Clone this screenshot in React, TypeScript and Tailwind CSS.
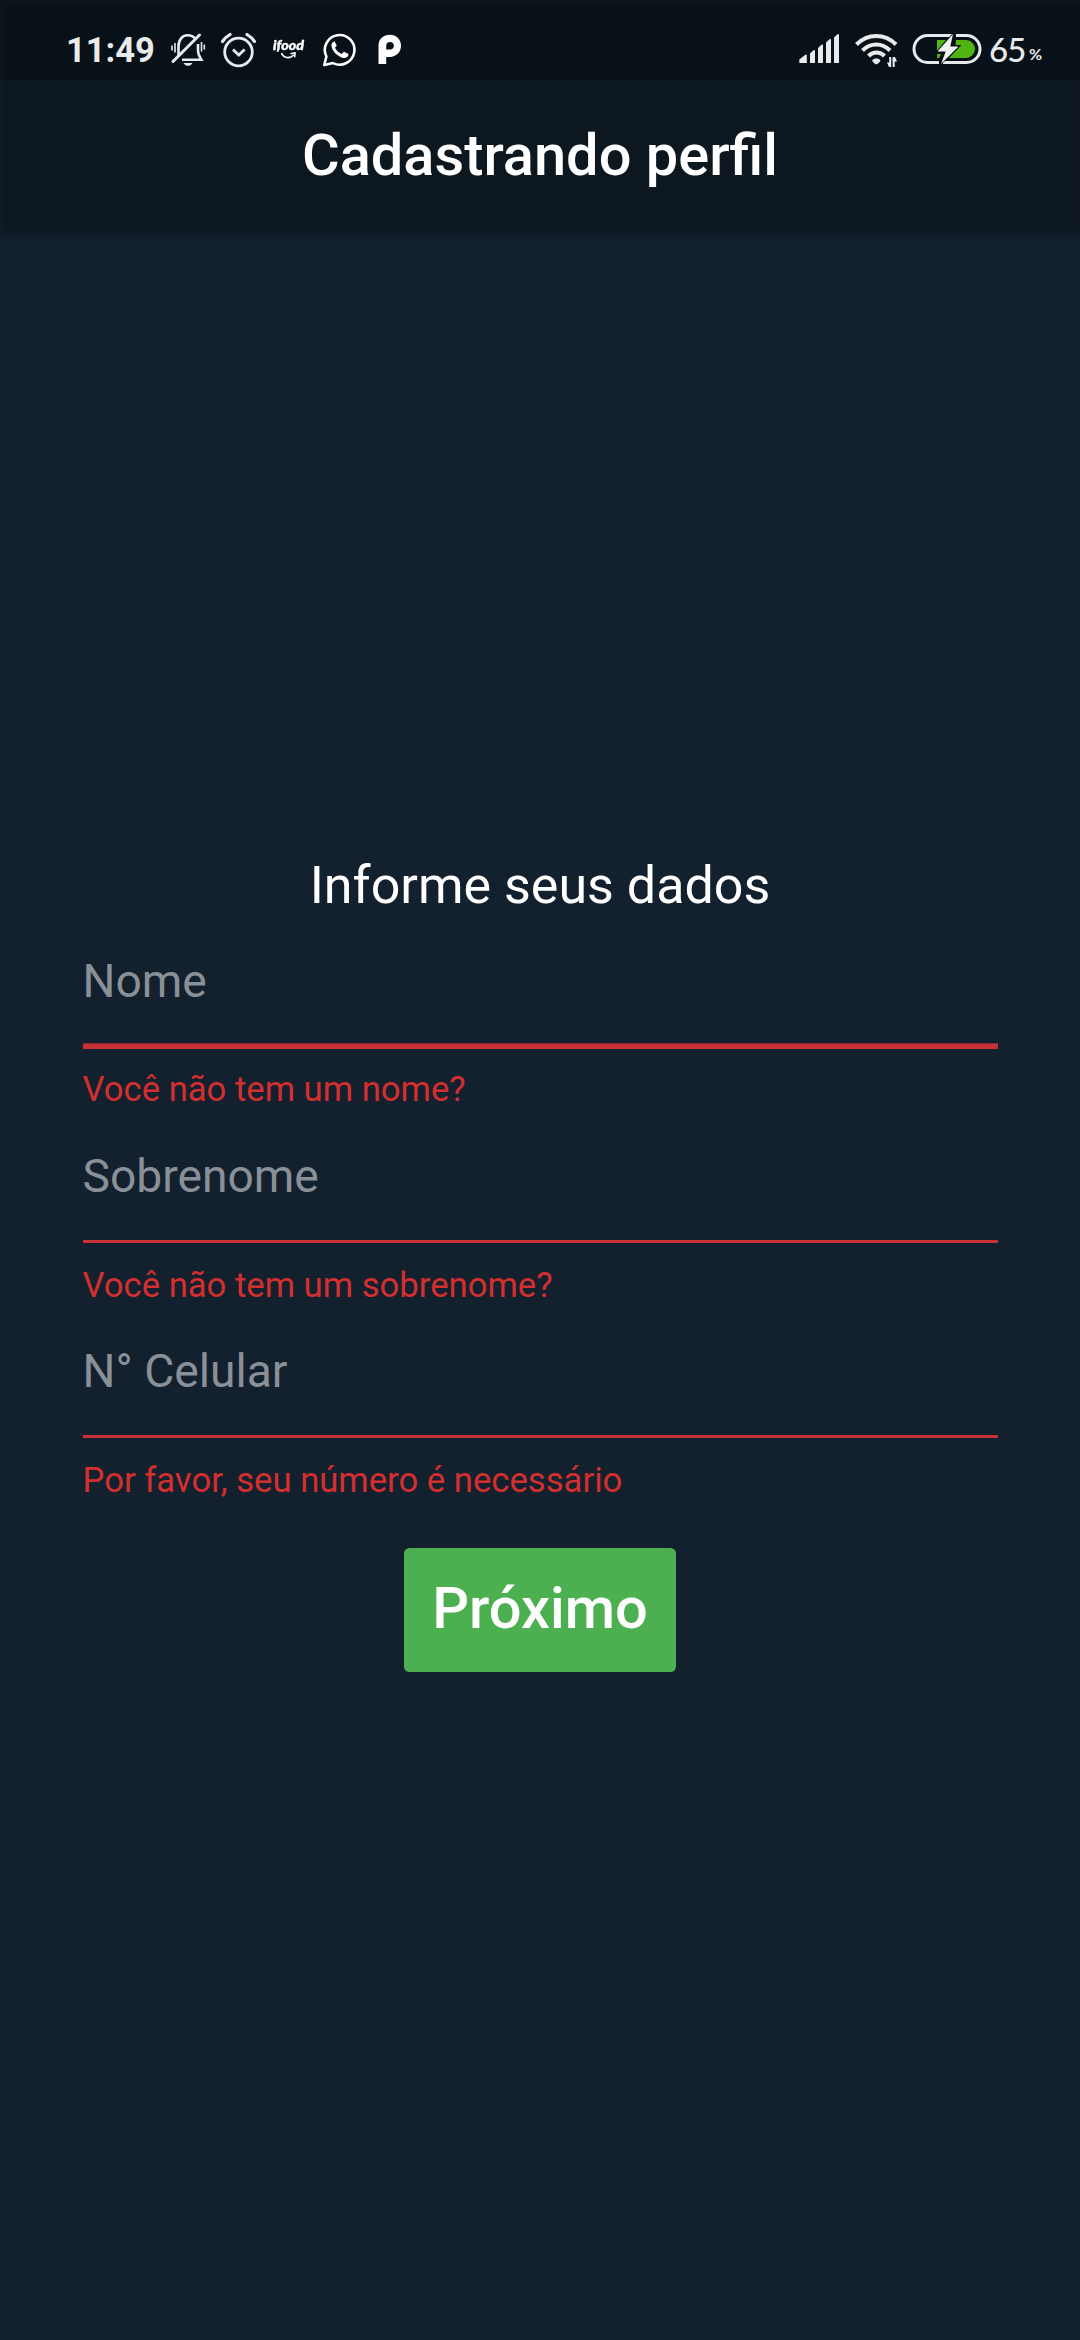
import React from "react";

function BellOff() {
  return (
    <svg className="mt-[32px] ml-[14px] h-[36px] w-[36px] shrink-0" viewBox="0 0 36 36" fill="none" stroke="#e8eaeb">
      <path d="M8.5 25V14.5C8.500 7 13 3.300 17.500 3.300c3.500 0 6 1.200 8 3.700M28 12v6.500c0 4 1.500 6 3.300 9.200H12" strokeWidth="2.600" />
      <path d="M3 29.500L29.500 3" strokeWidth="3" strokeLinecap="round" />
      <path d="M5 11v9.500M2 13.500v5M31.500 10v9.500M34.300 12.500v5" strokeWidth="1.600" />
      <path d="M13.500 31h9c-1 1.900-2.600 2.800-4.500 2.800s-3.500-.9-4.500-2.800z" fill="#e8eaeb" stroke="none" />
    </svg>
  );
}

function Alarm() {
  return (
    <svg className="mt-[31px] ml-[14px] h-[38px] w-[38px] shrink-0" viewBox="0 0 38 38" fill="none" stroke="#e8eaeb" strokeWidth="2.800">
      <circle cx="18.500" cy="21" r="13.800" />
      <path d="M2.500 10.500C4.500 7.500 7 5.300 10 3.500M27 3.500c3 1.800 5.500 4 7.500 7" strokeLinecap="round" strokeWidth="3.200" />
      <path d="M13 18.500l5.800 5.500 5.800-5.500" strokeWidth="2.800" />
    </svg>
  );
}

function Ifood() {
  return (
    <div className="mt-[38px] ml-[15px] flex h-[24px] w-[34px] shrink-0 flex-col">
      <span className="h-[14px] w-[34px] origin-left scale-x-[1.02] font-['Lato',sans-serif] text-[14px] leading-[14px] font-black text-white italic [-webkit-text-stroke:0.400px_white]">
        ifood
      </span>
      <svg className="ml-[7px] h-[9px] w-[18px]" viewBox="0 0 18 9" fill="none" stroke="white" strokeWidth="1.600">
        <path d="M1.500 1c2 5 8 6.500 12.500 1.800" />
        <path d="M10.500 1.800L15 .8l-.3 4.500" />
      </svg>
    </div>
  );
}

function WhatsApp() {
  return (
    <svg className="mt-[32px] ml-[15px] h-[36px] w-[36px] shrink-0" viewBox="0 0 36 36">
      <path d="M2.300 33l2.100-8.500A14.800 14.800 0 1 1 11 31.100z" fill="none" stroke="white" strokeWidth="2.600" strokeLinejoin="round" />
      <path d="M11.500 9.800c-1.600 1-2.400 2.500-2 4.500.9 5.300 6.500 10.500 11.500 11.700 2.400.5 4.900-.8 5.500-3.200.1-.5 0-.8-.5-1.100l-3.500-1.800c-.5-.2-.8-.1-1.200.3l-1.500 1.700c-3.200-1.300-5.400-3.300-6.800-6.200l1.400-1.600c.3-.4.3-.7.1-1.200l-1.600-3c-.3-.5-.8-.5-1.400-.1z" fill="white" />
    </svg>
  );
}

function PLogo() {
  return (
    <svg className="mt-[34px] ml-[20px] h-[30px] w-[24px] shrink-0" viewBox="0 0 24 30">
      <path fillRule="evenodd" d="M.5 30V11.500C.5 5 5.500.8 11.800.8 18.200.8 23 5.300 23 11.800S18 23 12 23H8.200v7zM12 8a3.800 3.800 0 0 0-3.800 3.800v3.800H12A3.800 3.800 0 1 0 12 8z" fill="white" />
    </svg>
  );
}

function Signal() {
  return (
    <svg className="mt-[33px] h-[30px] w-[42px] shrink-0" viewBox="0 0 42 30" fill="#e8eaeb">
      <path d="M.3 30v-3.500l6-4.700q1.500-1 1.500.5V30zM11 30V20.500l3.500-3.200q1.500-1 1.500.5V30zM19 30V15l3.500-3.200q1.500-1 1.500.5V30zM27 30V9.500l3.500-3.200q1.500-1 1.500.5V30zM35 30V4.500L38.500 1.300q1.500-1 1.500.5V30z" />
    </svg>
  );
}

function Wifi() {
  return (
    <svg className="mt-[32px] ml-[13px] h-[36px] w-[46px] shrink-0" viewBox="0 0 46 36" fill="none" stroke="#e8eaeb" strokeWidth="4">
      <path d="M2.500 12.500C13.500 1 31 1 42 12.500M8.500 18.500c8-8 19.500-8 27.500 0M14.500 24c4.500-4.600 11.500-4.600 16 0" />
      <path d="M18.200 28.500c1.500-2.600 6.700-2.600 8.200 0 0 .8-2.500 3.800-4.100 3.800s-4.100-3-4.100-3.800z" fill="#e8eaeb" stroke="none" />
      <path d="M36.200 25v10M39.700 25v10" strokeWidth="2" />
      <path d="M37 35h-2l-2-4.500H37zM39 25h2l2 4.500h-4.500z" fill="#e8eaeb" stroke="none" />
    </svg>
  );
}

function Battery() {
  return (
    <svg className="mt-[33px] ml-[12px] h-[32px] w-[70px] shrink-0" viewBox="0 0 70 32" fill="none">
      <path d="M41 2.500H15.500a13.500 13.500 0 0 0 0 27H27M44 2.500h10.500a13.500 13.500 0 0 1 0 27H31" stroke="#e8eaeb" strokeWidth="3" />
      <path d="M25 7h9l-9 11zM44 7h10a9 9 0 0 1 0 18H37l12.500-13H43.500zM25 21h4l-2 4h-2z" fill="#50b512" />
      <path d="M41 1L25.500 18.500h8.200L29 31l17.500-17.500h-8.200z" fill="#f1f3f3" stroke="#0a1118" strokeWidth="1.500" paintOrder="stroke" />
    </svg>
  );
}

function StatusBar() {
  return (
    <header className="relative flex h-[80px] items-start justify-between bg-black/25 pr-[37px] pl-[66px] text-[#e8eaeb]">
      <div className="flex items-start">
        <span className="mt-[30px] w-[90px] font-['Roboto',sans-serif] text-[34.500px] leading-[40px] font-bold whitespace-nowrap">11:49</span>
        <BellOff />
        <Alarm />
        <Ifood />
        <WhatsApp />
        <PLogo />
      </div>
      <div className="flex items-start">
        <Signal />
        <Wifi />
        <Battery />
        <span className="mt-[29px] ml-[7px] w-[38px] font-['Lato',sans-serif] text-[33px] leading-[40px] font-medium tracking-[-1px]">65</span>
        <span className="mt-[44px] ml-[2px] w-[14px] font-['Lato',sans-serif] text-[16px] leading-[20px] font-bold tracking-[-1px]">%</span>
      </div>
    </header>
  );
}

const fields = [
  { label: "Nome", error: "Você não tem um nome?", line: "mt-[36.100px] mb-[20.250px] h-[6px] border-t border-[#822a30]" },
  { label: "Sobrenome", error: "Você não tem um sobrenome?", line: "mt-[37.600px] mb-[22px] h-[3px]" },
  { label: "N° Celular", error: "Por favor, seu número é necessário", line: "mt-[37.600px] mb-[21.750px] h-[3px]" },
];

export default function App() {
  return (
    <div className="flex h-[2340px] w-[1080px] flex-col overflow-hidden bg-[#13202e] font-['Roboto',sans-serif] text-white">
      <div className="relative h-[234px] shrink-0">
        {/* soft-edged app bar background */}
        <div className="absolute top-0 -right-[4px] bottom-0 left-0 bg-[#0d1720] blur-[5px]" />
        <StatusBar />
        <h1 className="relative mt-[43px] text-center text-[57.750px] leading-[64px] font-medium">Cadastrando perfil</h1>
      </div>
      <main className="mt-[620px] flex flex-col px-[82.500px]">
        <h2 className="mb-[28.900px] text-center text-[52px] leading-[64px]">Informe seus dados</h2>
        {fields.map((f) => (
          <section key={f.label} className="flex h-[195.250px] flex-col">
            <label className="mt-[8px] text-[46.200px] leading-[52px] text-[#8a9097]">{f.label}</label>
            <div className={`${f.line} shrink-0 bg-[#c83136]`} />
            <p className="text-[34.650px] leading-[40px] text-[#d32f2f]">{f.error}</p>
          </section>
        ))}
        <button className="mt-[15px] h-[124px] w-[272px] self-center rounded-[5.500px] bg-[#4caf50] pb-[2px] text-[57.750px] font-medium">Próximo</button>
      </main>
    </div>
  );
}
